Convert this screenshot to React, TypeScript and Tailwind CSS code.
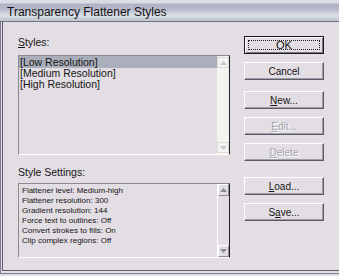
import React from "react";

const items = ["[Low Resolution]", "[Medium Resolution]", "[High Resolution]"];

const settings = [
  "Flattener level: Medium-high",
  "Flattener resolution: 300",
  "Gradient resolution: 144",
  "Force text to outlines: Off",
  "Convert strokes to fills: On",
  "Clip complex regions: Off",
];

function Label({ text, u }: { text: string; u: number }) {
  return (
    <>
      {text.slice(0, u)}
      <span className="underline underline-offset-[1px]">{text[u]}</span>
      {text.slice(u + 1)}
    </>
  );
}

function Btn({
  text,
  u,
  disabled,
  isDefault,
  className = "",
}: {
  text: string;
  u?: number;
  disabled?: boolean;
  isDefault?: boolean;
  className?: string;
}) {
  if (isDefault)
    return (
      <div
        className={`relative flex h-[18px] w-[80px] items-center justify-center border border-[#1a1a1a] text-[11px] text-[#111] shadow-[inset_1px_1px_0_#ffffff,inset_-1px_-1px_0_#7a7886] ${className}`}
      >
        {text}
        <span className="absolute inset-[3px] border border-dotted border-[#222]" />
      </div>
    );
  return (
    <div
      className={`flex h-[18px] w-[80px] items-center justify-center border border-t-white border-l-white border-r-[#5c5a68] border-b-[#5c5a68] text-[10px] shadow-[inset_-1px_-1px_0_#9e9ca8] ${
        disabled ? "text-[#a4a2ac] [text-shadow:1px_1px_0_#ffffff]" : "text-[#151515]"
      } ${className}`}
    >
      {u === undefined ? text : <Label text={text} u={u} />}
    </div>
  );
}

function Arrow({ up, faint }: { up?: boolean; faint?: boolean }) {
  return (
    <svg width="7" height="4" viewBox="0 0 7 4">
      <path
        d={up ? "M0 4 L3.5 0 L7 4 Z" : "M0 0 L3.5 4 L7 0 Z"}
        fill={faint ? "#c8c6cc" : "#8a8894"}
      />
    </svg>
  );
}

export default function App() {
  return (
    <div className="relative h-[276px] w-[339px] overflow-hidden bg-[#e3dee3] font-['Liberation_Sans',Arial,sans-serif]">
      {/* title bar */}
      <div className="h-[22px] border-b border-[#6c7080] bg-[linear-gradient(180deg,#dcdce4_0px,#dcdce4_3px,#aeb2c4_4px,#b4b8c8_9px,#c8ccd8_12px,#dde0e8_16px,#c4c8d2_19px)] pl-[7px] pt-[3px] text-[12px] leading-[18px] text-[#141414]">
        Transparency Flattener Styles
      </div>

      {/* frame */}
      <div className="h-[252px] border-b border-l border-[#7c7a8c] pb-[2px] pl-[1px]">
        <div className="flex h-full border-b border-l border-[#5c5a6c] pl-[15px] pt-[14px]">
          {/* left column */}
          <div className="flex w-[212px] flex-col">
            <div className="h-[12px] text-[10.5px] leading-[12px] text-[#151515]">
              <Label text="Styles:" u={0} />
            </div>
            <div className="mt-[7px] flex h-[100px] border-b border-l border-r border-t border-b-white border-l-[#8a8890] border-r-[#222] border-t-[#8a8890]">
              <div className="flex-1 text-[10.5px] leading-[11px] text-[#151515]">
                {items.map((t, i) => (
                  <div
                    key={t}
                    className={`pl-[1px] ${i === 0 ? "h-[12px] bg-[#abafbc] leading-[12px]" : "h-[11px]"}`}
                  >
                    {t}
                  </div>
                ))}
              </div>
              <div className="flex w-[12px] flex-col justify-between bg-[#f3f3ef] py-[1px]">
                <div className="flex h-[11px] items-center justify-center border border-[#dcdcd4]">
                  <Arrow up faint />
                </div>
                <div className="flex h-[11px] items-center justify-center border border-[#dcdcd4]">
                  <Arrow faint />
                </div>
              </div>
            </div>

            <div className="mt-[11px] h-[12px] text-[10.5px] leading-[12px] text-[#151515]">
              Style Settings:
            </div>
            <div className="mt-[5px] flex h-[75px] border-b border-l border-r border-t border-b-white border-l-[#8a8890] border-r-[#222] border-t-[#8a8890]">
              <div className="flex-1 pl-[3px] pt-[2px] text-[8px] leading-[10px] text-[#151515]">
                {settings.map((s) => (
                  <div key={s}>{s}</div>
                ))}
              </div>
              <div className="flex w-[12px] flex-col justify-between border-l border-white bg-[#e3dee3]">
                <div className="flex h-[12px] items-center justify-center border border-t-white border-l-white border-r-[#8c8a96] border-b-[#8c8a96]">
                  <Arrow up />
                </div>
                <div className="flex h-[12px] items-center justify-center border border-t-white border-l-white border-r-[#8c8a96] border-b-[#8c8a96]">
                  <Arrow />
                </div>
              </div>
            </div>
          </div>

          {/* buttons */}
          <div className="ml-[14px] flex flex-col">
            <Btn text="OK" isDefault />
            <Btn text="Cancel" className="mt-[8px]" />
            <Btn text="New..." u={0} className="mt-[11px]" />
            <Btn text="Edit..." u={0} disabled className="mt-[8px]" />
            <Btn text="Delete" u={0} disabled className="mt-[8px]" />
            <Btn text="Load..." u={0} className="mt-[16px]" />
            <Btn text="Save..." u={1} className="mt-[8px]" />
          </div>
        </div>
      </div>
    </div>
  );
}
